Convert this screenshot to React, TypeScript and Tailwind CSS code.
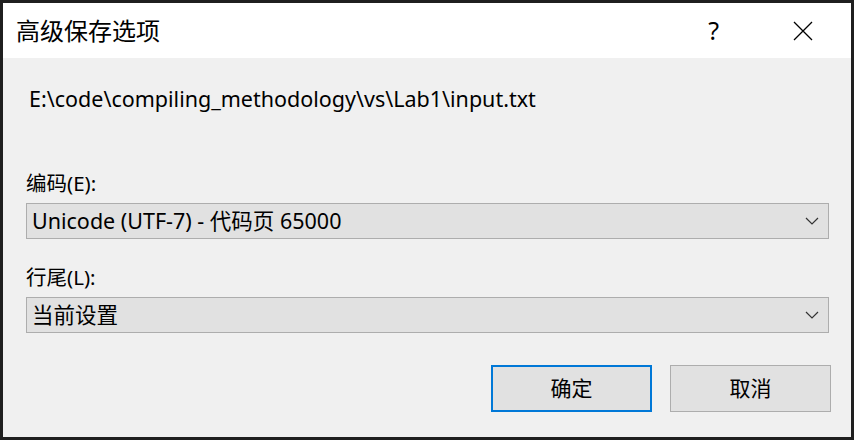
import { useState } from "react";

const font = "font-['Noto_Sans','Noto_Sans_CJK_SC',sans-serif]";

const Combo = ({ value }: { value: string }) => (
  <div className="flex h-[36px] items-center justify-between border border-[#adadad] bg-[#e1e1e1] pl-[5px] pr-[9px]">
    <span className="text-[21.5px] leading-none text-black">{value}</span>
    <svg width="14" height="8" viewBox="0 0 14 8" className="text-[#333]">
      <path d="M1 1 L7 7 L13 1" fill="none" stroke="currentColor" strokeWidth="1.2" />
    </svg>
  </div>
);

const App = () => {
  const [encoding] = useState("Unicode (UTF-7) - 代码页 65000");
  const [lineEnd] = useState("当前设置");

  return (
    <div className={`h-[440px] w-[854px] bg-[#1f1f1f] p-[3px] ${font}`}>
      <div className="flex h-full flex-col bg-[#f0f0f0]">
        {/* title bar */}
        <div className="flex h-[55px] items-center bg-white pl-[13px]">
          <span className="flex-1 text-[24px] text-black">高级保存选项</span>
          <span className="mr-[74px] text-[25px] text-black">?</span>
          <svg width="20" height="20" viewBox="0 0 20 20" className="mr-[38px]">
            <path d="M1 1 L19 19 M19 1 L1 19" stroke="#000" strokeWidth="1.3" />
          </svg>
        </div>

        <div className="flex flex-1 flex-col pl-[23px] pr-[22px]">
          <div className="mt-[26px] h-[30px] pl-[3px] text-[21.5px] leading-[30px] text-black">
            E:\code\compiling_methodology\vs\Lab1\input.txt
          </div>

          <div className="mt-[54px] h-[30px] text-[20.5px] leading-[30px] text-black">编码(E):</div>
          <div className="mt-[5px]">
            <Combo value={encoding} />
          </div>

          <div className="mt-[23px] h-[30px] text-[20.5px] leading-[30px] text-black">行尾(L):</div>
          <div className="mt-[5px]">
            <Combo value={lineEnd} />
          </div>

          <div className="mt-[32px] flex justify-end gap-[18px]">
            <button className="h-[47px] w-[161px] border-2 border-[#0078d7] bg-[#e1e1e1] text-[21px] text-black">
              确定
            </button>
            <button className="mr-[-2px] h-[47px] w-[161px] border border-[#adadad] bg-[#e1e1e1] text-[21px] text-black">
              取消
            </button>
          </div>
        </div>
      </div>
    </div>
  );
};

export default App;
